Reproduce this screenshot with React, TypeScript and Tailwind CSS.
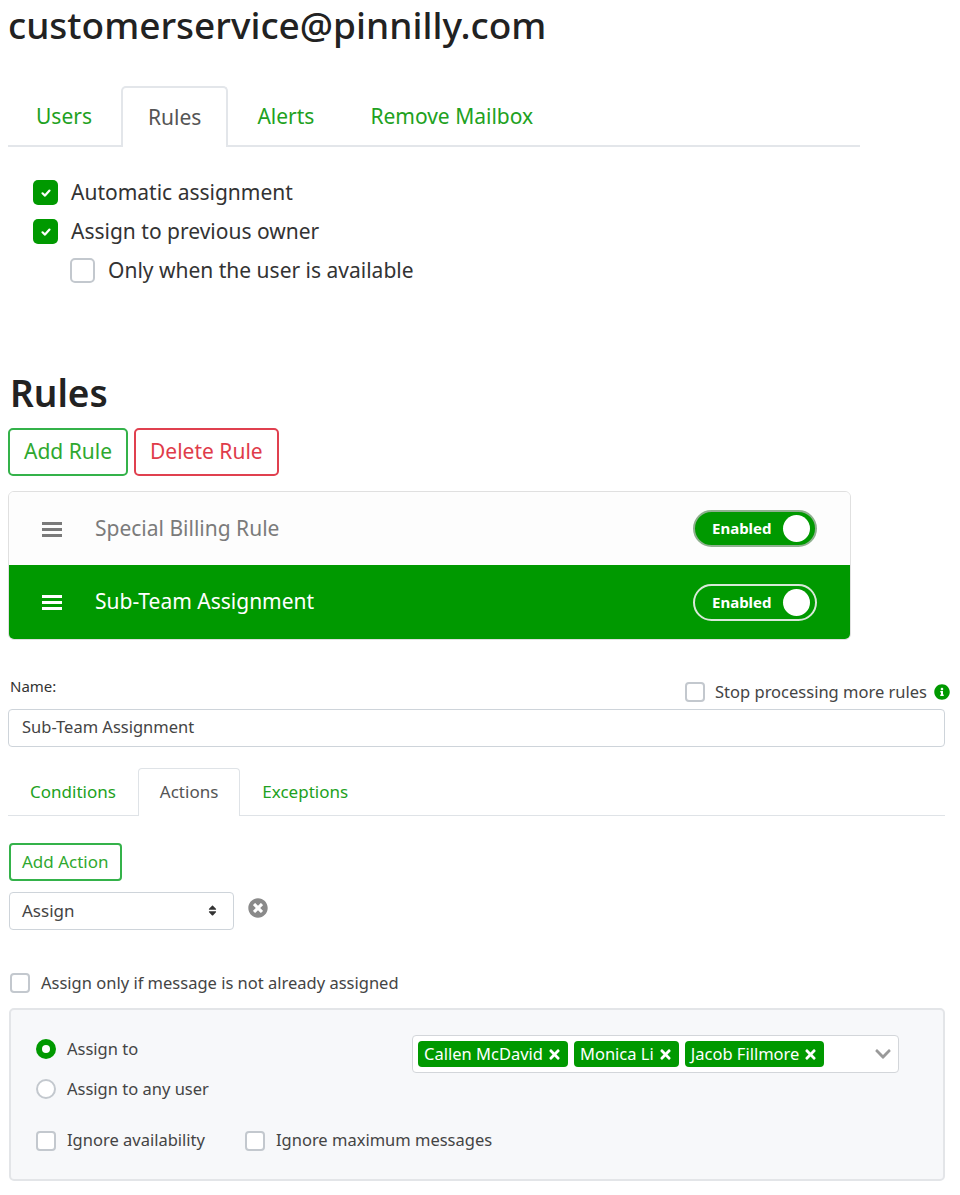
import { FaInfoCircle, FaTimesCircle, FaSort, FaTimes, FaChevronDown } from "react-icons/fa";

const font = { fontFamily: '"Noto Sans", "Open Sans", sans-serif' };

function Check({ checked, size = "lg" }: { checked?: boolean; size?: "lg" | "sm" }) {
  const box = size === "lg" ? "w-[25px] h-[25px] rounded-[5px]" : "w-[20px] h-[20px] rounded-[4px]";
  if (checked) {
    return (
      <span className={`${box} bg-[#009900] flex items-center justify-center shrink-0`}>
        <svg width="12" height="12" viewBox="0 0 12 12">
          <path d="M2.5 6.3 L5 8.6 L9.5 3.6" stroke="white" strokeWidth="2.2" fill="none" strokeLinecap="round" strokeLinejoin="round" />
        </svg>
      </span>
    );
  }
  return <span className={`${box} bg-white border-2 border-[#c3c8ce] shrink-0`} />;
}

function Radio({ checked }: { checked?: boolean }) {
  if (checked) {
    return (
      <span className="w-[20px] h-[20px] rounded-full bg-[#009900] flex items-center justify-center shrink-0">
        <span className="w-[8px] h-[8px] rounded-full bg-white" />
      </span>
    );
  }
  return <span className="w-[20px] h-[20px] rounded-full bg-white border-2 border-[#c3c8ce] shrink-0" />;
}

function Bars({ color }: { color: string }) {
  return (
    <svg width="20" height="18" viewBox="0 0 20 18" className="shrink-0">
      <rect x="0" y="2" width="20" height="3" fill={color} />
      <rect x="0" y="8" width="20" height="3" fill={color} />
      <rect x="0" y="14" width="20" height="3" fill={color} />
    </svg>
  );
}

function Toggle({ onGreen }: { onGreen?: boolean }) {
  return (
    <div
      className={`w-[124px] h-[37px] rounded-full flex items-center justify-between pl-[17px] pr-[5px] ${
        onGreen ? "border-2 border-[#d8e8d8]" : "bg-[#009900] border-2 border-[#8fb08f]"
      }`}
    >
      <span className="text-white text-[15px] font-bold">Enabled</span>
      <span className="w-[27px] h-[27px] rounded-full bg-white" />
    </div>
  );
}

function Tag({ name }: { name: string }) {
  return (
    <span className="h-[26px] bg-[#009900] text-white rounded-[4px] px-[6px] flex items-center gap-[4px] text-[16.5px]">
      {name}
      <FaTimes className="text-[15px]" />
    </span>
  );
}

export default function App() {
  const mainTabs = ["Users", "Rules", "Alerts", "Remove Mailbox"];
  const subTabs = ["Conditions", "Actions", "Exceptions"];

  return (
    <div className="w-[960px] bg-white text-[#333] pl-2 pr-[15px] pb-4" style={font}>
      <h1 className="mt-[2px] text-[37px] leading-[46px] font-medium text-[#222]">customerservice@pinnilly.com</h1>

      {/* main tabs */}
      <div className="mt-[38px] w-[852px] flex border-b-2 border-[#e3e6ea] h-[61px]">
        {mainTabs.map((t) => (
          <div
            key={t}
            className={`flex items-center text-[21px] -mb-[2px] ${
              t === "Rules"
                ? "border-2 border-b-0 border-[#e3e6ea] rounded-t-[5px] bg-white text-[#555] mx-[1px] px-[25px]"
                : "text-[#21a121] px-[28px]"
            }`}
          >
            {t}
          </div>
        ))}
      </div>

      {/* assignment options */}
      <div className="mt-[33px] pl-[25px] flex flex-col gap-[14px] text-[21px] text-[#333]">
        <label className="flex items-center gap-[13px] h-[25px]">
          <Check checked />
          Automatic assignment
        </label>
        <label className="flex items-center gap-[13px] h-[25px]">
          <Check checked />
          Assign to previous owner
        </label>
        <label className="flex items-center gap-[13px] h-[25px] pl-[37px]">
          <Check />
          Only when the user is available
        </label>
      </div>

      <h2 className="mt-[87px] text-[37px] leading-[46px] font-semibold text-[#222] pl-[2px]">Rules</h2>

      <div className="mt-[12px] flex gap-[6px]">
        <button className="h-[48px] px-[14px] border-2 border-[#34b24a] rounded-[5px] text-[#2fa82f] text-[21px]">
          Add Rule
        </button>
        <button className="h-[48px] px-[14px] border-2 border-[#e0404f] rounded-[5px] text-[#df3c4a] text-[21px]">
          Delete Rule
        </button>
      </div>

      {/* rule list */}
      <div className="mt-[15px] w-[843px] border border-[#e0e0e0] rounded-[6px] overflow-hidden">
        <div className="h-[73px] bg-[#fdfdfd] flex items-center pl-[33px] pr-[33px]">
          <Bars color="#7a7a7a" />
          <span className="ml-[33px] text-[21px] text-[#7b7b7b] flex-1">Special Billing Rule</span>
          <Toggle />
        </div>
        <div className="h-[74px] bg-[#009900] flex items-center pl-[33px] pr-[33px]">
          <Bars color="#ffffff" />
          <span className="ml-[33px] text-[21px] text-white flex-1">Sub-Team Assignment</span>
          <Toggle onGreen />
        </div>
      </div>

      {/* name */}
      <div className="mt-[35px] flex items-end justify-between">
        <span className="text-[15px] text-[#333] pl-[2px] pb-[1px]">Name:</span>
        <label className="flex items-center gap-[10px] text-[16.5px] text-[#444] -mr-[5px] -mb-[6px]">
          <Check size="sm" />
          Stop processing more rules
          <FaInfoCircle className="text-[#009900] text-[16px] -ml-[3px]" />
        </label>
      </div>
      <div className="mt-[10px] h-[38px] border border-[#ced4da] rounded-[4px] flex items-center px-[13px] text-[16.5px] text-[#444]">
        Sub-Team Assignment
      </div>

      {/* sub tabs */}
      <div className="mt-[21px] flex border-b border-[#dfe3e7] h-[48px]">
        {subTabs.map((t) => (
          <div
            key={t}
            className={`flex items-center text-[17px] -mb-[1px] ${
              t === "Actions"
                ? "border border-b-0 border-[#dfe3e7] rounded-t-[4px] bg-white text-[#555] px-[21px]"
                : "text-[#21a121] px-[22px]"
            }`}
          >
            {t}
          </div>
        ))}
      </div>

      <button className="mt-[27px] ml-[1px] h-[38px] px-[11px] border-2 border-[#34b24a] rounded-[4px] text-[#2fa82f] text-[17px]">
        Add Action
      </button>

      <div className="mt-[11px] flex items-start gap-[14px] pl-[1px]">
        <div className="w-[225px] h-[38px] border border-[#ced4da] rounded-[4px] flex items-center justify-between pl-[12px] pr-[14px] text-[17px] text-[#444]">
          Assign
          <FaSort className="text-[#333] text-[13px]" />
        </div>
        <FaTimesCircle className="text-[#8a8a8a] text-[20px] mt-[6px]" />
      </div>

      <label className="mt-[41px] pl-[2px] flex items-center gap-[11px] text-[16.5px] text-[#444]">
        <Check size="sm" />
        Assign only if message is not already assigned
      </label>

      {/* assign panel */}
      <div className="mt-[13px] ml-[1px] h-[173px] border-2 border-[#e3e5e8] rounded-[5px] bg-[#f7f8fa] pl-[25px] pt-[25px] pr-[44px]">
        <div className="flex justify-between">
          <div className="flex flex-col gap-[20px] pt-[4px] text-[16.5px] text-[#444]">
            <label className="flex items-center gap-[11px] h-[20px]">
              <Radio checked />
              Assign to
            </label>
            <label className="flex items-center gap-[11px] h-[20px]">
              <Radio />
              Assign to any user
            </label>
          </div>
          <div className="w-[487px] h-[38px] bg-white border border-[#d3d6da] rounded-[4px] flex items-center pl-[5px] pr-[6px] gap-[6px]">
            <Tag name="Callen McDavid" />
            <Tag name="Monica Li" />
            <Tag name="Jacob Fillmore" />
            <FaChevronDown className="ml-auto text-[#9a9a9a] text-[18px]" />
          </div>
        </div>
        <div className="mt-[29px] flex items-center gap-[40px] text-[16.5px] text-[#444]">
          <label className="flex items-center gap-[11px]">
            <Check size="sm" />
            Ignore availability
          </label>
          <label className="flex items-center gap-[11px]">
            <Check size="sm" />
            Ignore maximum messages
          </label>
        </div>
      </div>
    </div>
  );
}
